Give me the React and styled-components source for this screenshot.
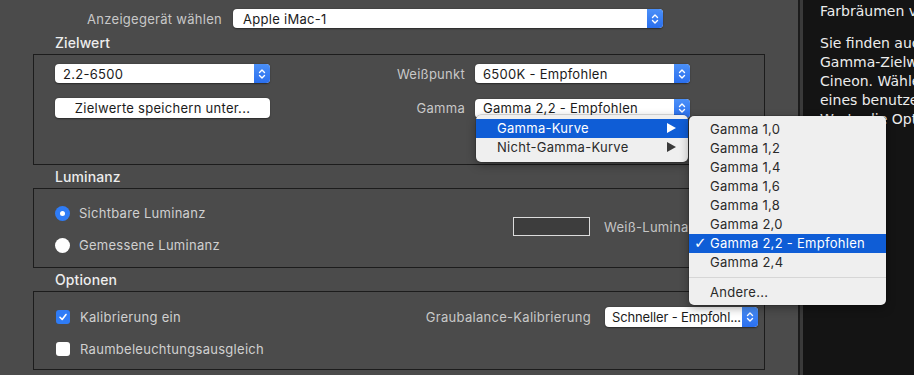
import React from "react";
import styled, { createGlobalStyle } from "styled-components";

// -----------------------------------
// Global
// -----------------------------------

const GlobalStyle = createGlobalStyle`
  html, body {
    margin: 0;
    padding: 0;
    background: #4b4b4b;
    overflow: hidden;
  }
  body {
    font-family: Inter, "Liberation Sans", sans-serif;
    font-size: 13px;
    letter-spacing: 0.28px;
  }
`;

// -----------------------------------
// Styled Components
// -----------------------------------

const Window = styled.div`
  display: flex;
  width: 914px;
  height: 375px;
  overflow: hidden;
`;

const MainPanel = styled.div`
  width: 798px;
  flex-shrink: 0;
  box-sizing: border-box;
  padding: 9px 33px 0;
  background: #4b4b4b;
`;

const Divider = styled.div`
  width: 5px;
  flex-shrink: 0;
  box-sizing: border-box;
  background: #3a3a3a;
  border-left: 2px solid #1c1c1c;
`;

const HelpPanel = styled.div`
  flex: 1;
  background: #141414;
  color: #ececec;
  font-family: "DejaVu Sans", Verdana, sans-serif;
  font-size: 14px;
  line-height: 19px;
  letter-spacing: 0;
  padding: 2px 0 0 17px;
  white-space: nowrap;
  overflow: hidden;
`;

const HelpParagraph = styled.p`
  margin: 0 0 13px;
`;

const DeviceRow = styled.div`
  display: grid;
  grid-template-columns: 189px 430px;
  column-gap: 11px;
  align-items: center;
  height: 19px;
`;

const FieldLabel = styled.span`
  color: #c8c8c8;
  text-align: ${(p) => (p.$right ? "right" : "left")};
  padding-right: ${(p) => (p.$pad ? "10px" : "0")};
  white-space: nowrap;
`;

const SectionTitle = styled.div`
  height: 23px;
  margin-top: ${(p) => (p.$first ? "3px" : "0")};
  padding-left: 22px;
  display: flex;
  align-items: center;
  color: #ededed;
  font-size: 14px;
  font-weight: 500;
  letter-spacing: 0.1px;
`;

const GroupBox = styled.div`
  box-sizing: border-box;
  height: ${(p) => p.$height}px;
  border: 1px solid #1c1c1c;
  padding: ${(p) => p.$padding};
`;

const TargetGrid = styled.div`
  display: grid;
  grid-template-columns: 215px 205px 215px;
  grid-template-rows: 19px 20px;
  row-gap: 15px;
  align-items: center;
`;

const LuminanceGrid = styled.div`
  display: grid;
  grid-template-columns: 458px 77px auto;
  grid-template-rows: 20px 20px;
  row-gap: 12px;
  align-items: center;
`;

const OptionsGrid = styled.div`
  display: grid;
  grid-template-columns: 1fr auto 153px;
  grid-template-rows: 20px 20px;
  row-gap: 12px;
  column-gap: 14px;
  align-items: center;
`;

const SelectBox = styled.div`
  position: relative;
  display: flex;
  align-items: center;
  height: ${(p) => p.$h || 19}px;
  background: #ffffff;
  border-radius: 4px;
  box-shadow: 0 0.5px 1.5px rgba(0, 0, 0, 0.45);
  color: #1b1b1b;
`;

const SelectText = styled.span`
  flex: 1;
  padding-left: ${(p) => p.$pad}px;
  white-space: nowrap;
  overflow: hidden;
  letter-spacing: ${(p) => (p.$tight ? "-0.15px" : "inherit")};
`;

const Stepper = styled.span`
  width: 16px;
  flex-shrink: 0;
  align-self: stretch;
  display: flex;
  align-items: center;
  justify-content: center;
  border-radius: 0 4px 4px 0;
  background: linear-gradient(#4b90f8, #2a6fee);
`;

const PushButton = styled.div`
  height: 20px;
  display: flex;
  align-items: center;
  justify-content: center;
  background: #ffffff;
  border-radius: 4px;
  box-shadow: 0 0.5px 1.5px rgba(0, 0, 0, 0.45);
  color: #1b1b1b;
`;

const ChoiceRow = styled.label`
  grid-column: 1;
  display: flex;
  align-items: center;
  gap: 9px;
  color: #d0d0d0;
  white-space: nowrap;
`;

const Radio = styled.span`
  width: 15px;
  height: 15px;
  border-radius: 50%;
  background: ${(p) => (p.$on ? "#2f7cf6" : "#ffffff")};
  display: flex;
  align-items: center;
  justify-content: center;
  &::after {
    content: "";
    display: ${(p) => (p.$on ? "block" : "none")};
    width: 5px;
    height: 5px;
    border-radius: 50%;
    background: #ffffff;
  }
`;

const Checkbox = styled.span`
  width: 14px;
  height: 14px;
  margin: 0 1px;
  border-radius: 3px;
  background: ${(p) => (p.$on ? "#2f7cf6" : "#ffffff")};
  display: flex;
  align-items: center;
  justify-content: center;
`;

const Swatch = styled.div`
  grid-column: 2;
  grid-row: 1 / 3;
  box-sizing: border-box;
  height: 19px;
  margin-bottom: 5px;
  border: 1px solid #dcdcdc;
  background: #3d3d3d;
`;

const SwatchLabel = styled.span`
  grid-column: 3;
  grid-row: 1 / 3;
  margin: 0 0 5px 14px;
  color: #c6c6c6;
  white-space: nowrap;
`;

const Menu = styled.div`
  position: absolute;
  z-index: 10;
  top: ${(p) => p.$top}px;
  left: ${(p) => p.$left};
  width: ${(p) => p.$width}px;
  padding: 4px 0 ${(p) => p.$bottom}px;
  background: #efefef;
  border-radius: 5px;
  box-shadow: 0 3px 10px rgba(0, 0, 0, 0.35), 0 0 0 0.5px rgba(0, 0, 0, 0.25);
  color: #2a2a2a;
`;

const MenuItem = styled.div`
  position: relative;
  height: 19px;
  display: flex;
  align-items: center;
  padding: 0 12px 0 21px;
  background: ${(p) => (p.$active ? "#0f5dd6" : "transparent")};
  color: ${(p) => (p.$active ? "#ffffff" : "#2a2a2a")};
  white-space: nowrap;
`;

const MenuText = styled.span`
  flex: 1;
`;

const CheckMark = styled.span`
  position: absolute;
  left: 5px;
  font-size: 15px;
  font-family: "DejaVu Sans", sans-serif;
`;

const MenuSeparator = styled.div`
  height: 1px;
  margin: 5px 0;
  background: #d6d6d6;
`;

// -----------------------------------
// React Components
// -----------------------------------

const Chevrons = () => (
  <svg width="8" height="12" viewBox="0 0 8 12">
    <path
      d="M1.5 4.5 L4 2 L6.5 4.5 M1.5 7.5 L4 10 L6.5 7.5"
      fill="none"
      stroke="#ffffff"
      strokeWidth="1.4"
      strokeLinecap="round"
      strokeLinejoin="round"
    />
  </svg>
);

const Tick = () => (
  <svg width="10" height="10" viewBox="0 0 10 10">
    <path
      d="M2 5.3 L4.2 7.5 L8 2.5"
      fill="none"
      stroke="#ffffff"
      strokeWidth="1.6"
      strokeLinecap="round"
      strokeLinejoin="round"
    />
  </svg>
);

const Arrow = ({ color }) => (
  <svg width="9" height="10" viewBox="0 0 9 10">
    <polygon points="0,0 9,5 0,10" fill={color} />
  </svg>
);

const Select = ({ value, height, pad = 8, tight, children }) => (
  <SelectBox $h={height}>
    <SelectText $pad={pad} $tight={tight}>
      {value}
    </SelectText>
    <Stepper>
      <Chevrons />
    </Stepper>
    {children}
  </SelectBox>
);

const gammaValues = [
  "Gamma 1,0",
  "Gamma 1,2",
  "Gamma 1,4",
  "Gamma 1,6",
  "Gamma 1,8",
  "Gamma 2,0",
  "Gamma 2,2 - Empfohlen",
  "Gamma 2,4",
];

const GammaMenu = () => (
  <Menu $top={16} $left="1px" $width={212} $bottom={5}>
    <MenuItem $active>
      <MenuText>Gamma-Kurve</MenuText>
      <Arrow color="#ffffff" />
    </MenuItem>
    <MenuItem>
      <MenuText>Nicht-Gamma-Kurve</MenuText>
      <Arrow color="#3a3a3a" />
    </MenuItem>
    <Menu $top={1} $left="calc(100% + 1px)" $width={197} $bottom={3}>
      {gammaValues.map((g) => (
        <MenuItem key={g} $active={g.includes("Empfohlen")}>
          {g.includes("Empfohlen") && <CheckMark>✓</CheckMark>}
          <MenuText>{g}</MenuText>
        </MenuItem>
      ))}
      <MenuSeparator />
      <MenuItem>
        <MenuText>Andere...</MenuText>
      </MenuItem>
    </Menu>
  </Menu>
);

export default function App() {
  return (
    <Window>
      <GlobalStyle />
      <MainPanel>
        <DeviceRow>
          <FieldLabel $right>Anzeigegerät wählen</FieldLabel>
          <Select value="Apple iMac-1" pad={10} />
        </DeviceRow>

        <SectionTitle $first>Zielwert</SectionTitle>
        <GroupBox $height={111} $padding="9px 0 0 21px">
          <TargetGrid>
            <Select value="2.2-6500" />
            <FieldLabel $right $pad>
              Weißpunkt
            </FieldLabel>
            <Select value="6500K - Empfohlen" />
            <PushButton>Zielwerte speichern unter...</PushButton>
            <FieldLabel $right $pad>
              Gamma
            </FieldLabel>
            <Select value="Gamma 2,2 - Empfohlen">
              <GammaMenu />
            </Select>
          </TargetGrid>
        </GroupBox>

        <SectionTitle>Luminanz</SectionTitle>
        <GroupBox $height={80} $padding="14px 0 0 21px">
          <LuminanceGrid>
            <ChoiceRow>
              <Radio $on />
              Sichtbare Luminanz
            </ChoiceRow>
            <Swatch />
            <SwatchLabel>Weiß-Luminanz</SwatchLabel>
            <ChoiceRow>
              <Radio />
              Gemessene Luminanz
            </ChoiceRow>
          </LuminanceGrid>
        </GroupBox>

        <SectionTitle>Optionen</SectionTitle>
        <GroupBox $height={79} $padding="15px 6px 0 21px">
          <OptionsGrid>
            <ChoiceRow>
              <Checkbox $on>
                <Tick />
              </Checkbox>
              Kalibrierung ein
            </ChoiceRow>
            <FieldLabel>Graubalance-Kalibrierung</FieldLabel>
            <Select value="Schneller - Empfohl..." height={20} pad={7} tight />
            <ChoiceRow>
              <Checkbox />
              Raumbeleuchtungsausgleich
            </ChoiceRow>
          </OptionsGrid>
        </GroupBox>
      </MainPanel>
      <Divider />
      <HelpPanel>
        <HelpParagraph>Farbräumen verwenden.</HelpParagraph>
        <HelpParagraph>
          Sie finden auch
          <br />
          Gamma-Zielwerte wie L* und
          <br />
          Cineon. Wählen Sie zur Eingabe
          <br />
          eines benutzerdefinierten
          <br />
          Werte die Option „Andere...“.
        </HelpParagraph>
      </HelpPanel>
    </Window>
  );
}
